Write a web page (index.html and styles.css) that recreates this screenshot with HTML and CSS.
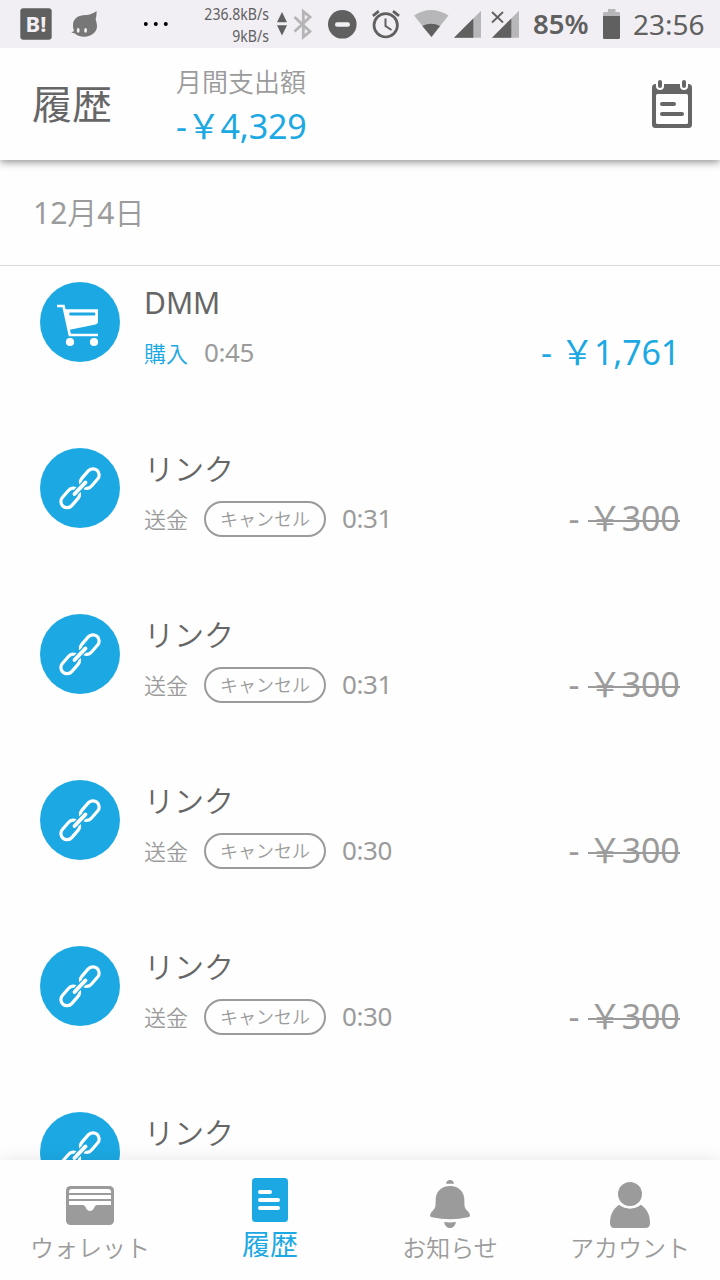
FILE: index.html
```html
<!DOCTYPE html>
<html lang="ja">
<head>
<meta charset="utf-8">
<title>履歴</title>
<link rel="stylesheet" href="styles.css">
</head>
<body>
<svg class="defs" aria-hidden="true">
  <symbol id="link" viewBox="0 0 80 80">
    <g fill="none" stroke="#fff" stroke-width="3.2">
      <rect x="38.8" y="24.4" width="22" height="12.4" rx="6.2" transform="rotate(-49 49.8 30.6)"/>
      <rect x="19.2" y="43.7" width="22" height="12.4" rx="6.2" transform="rotate(-49 30.2 49.9)"/>
    </g>
    <path d="M35 45.4L45 35" stroke="#1ca9e3" stroke-width="6.4" stroke-linecap="round"/>
    <path d="M34.5 46L45.5 34.4" stroke="#fff" stroke-width="3.8" stroke-linecap="round"/>
  </symbol>
</svg>
<div class="screen">
  <div class="status">
    <svg class="s-hatena" width="32" height="48" viewBox="20 0 32 48"><rect x="20.3" y="8.3" width="31.4" height="31.4" rx="3" fill="#606060"/><text x="36" y="31.8" text-anchor="middle" class="hatena-text">B!</text></svg>
    <svg class="s-mascot" width="28" height="48" viewBox="71 0 28 48"><path d="M71.3 32.5L74 31C70.5 21 76 14.5 87 15C91 14.6 93.5 13 96.5 11C96.7 14 96.5 17 95.6 19.5C98.5 27 97 32.5 90 35.5C84 38 77 36 75 33.5Z" fill="#777"/><ellipse cx="78.2" cy="30.4" rx="1.4" ry="2.4" fill="#f1eff3"/><ellipse cx="85.6" cy="30.4" rx="1.4" ry="2.4" fill="#f1eff3"/></svg>
    <svg class="s-dots" width="26" height="48" viewBox="143 0 26 48"><circle cx="145.8" cy="24" r="2"/><circle cx="155.8" cy="24" r="2"/><circle cx="165.8" cy="24" r="2"/></svg>
    <div class="speed"><span>236.8kB/s</span><span>9kB/s</span></div>
    <svg class="s-arrows" width="10" height="48" viewBox="277 0 10 48"><path d="M282 12L287 22.3H277ZM277 25.3H287L282 35.6Z" fill="#606060"/></svg>
    <svg class="s-bt" width="20" height="48" viewBox="293 0 20 48"><path d="M294.5 17L310 31.5L303.3 37V11.5L310 17L294.5 31.5" fill="none" stroke="#b5b4b6" stroke-width="2.8"/></svg>
    <svg class="s-minus" width="29" height="48" viewBox="328 0 29 48"><circle cx="342.3" cy="24.3" r="14.3" fill="#606060"/><rect x="335" y="22.3" width="15" height="4.4" rx="2.2" fill="#f1eff3"/></svg>
    <svg class="s-alarm" width="28" height="48" viewBox="372 0 28 48"><g fill="none" stroke="#606060"><circle cx="385.7" cy="25.3" r="11.7" stroke-width="2.7"/><path d="M385.5 18.5V26L391.5 30" stroke-width="2"/><path d="M372.9 15.9L378.8 11.2M399 15.9L393 11.2" stroke-width="2.8"/></g></svg>
    <svg class="s-wifi" width="35" height="48" viewBox="414 0 35 48"><path d="M414 15.6Q431 4.5 448.5 15.6L431.5 37Z" fill="#b7b6b8"/><path d="M422.3 26Q431 21.5 440 26L431.5 37Z" fill="#606060"/></svg>
    <svg class="s-sig" width="28" height="48" viewBox="454 0 28 48"><path d="M454 37.8L481 10.8V37.8Z" fill="#b7b6b8"/><path d="M454 37.8L473.3 18.5V37.8Z" fill="#606060"/></svg>
    <svg class="s-sigx" width="28" height="48" viewBox="491 0 28 48"><path d="M492 37.8L519 10.8V37.8Z" fill="#b7b6b8"/><path d="M492 37.8L511.3 18.5V37.8Z" fill="#606060"/><path d="M492 12L503 22.5M503 12L492 22.5" stroke="#606060" stroke-width="1.8"/></svg>
    <span class="percent">85%</span>
    <svg class="s-batt" width="18" height="48" viewBox="603 0 18 48"><path d="M608 9H615.5V12H618.5Q620 12 620 13.5V16H603V13.5Q603 12 604.5 12H608Z" fill="#b7b6b8"/><path d="M603 16H620V37.5Q620 39 618.5 39H604.5Q603 39 603 37.5Z" fill="#606060"/></svg>
    <span class="clock">23:56</span>
  </div>

  <header class="header">
    <h1 class="title">履歴</h1>
    <div class="summary"><div class="summary-label">月間支出額</div><div class="summary-value">-￥4,329</div></div>
    <svg class="calendar" width="40" height="48" viewBox="0 0 40 48"><rect y="4" width="40" height="44" rx="3.5" fill="#666"/><rect x="4" y="14" width="32" height="30" rx="1.5" fill="#fff"/><g fill="#666" stroke="#fff" stroke-width="2"><rect x="5" y="-1" width="6" height="10" rx="3"/><rect x="29" y="-1" width="6" height="10" rx="3"/></g><rect x="8" y="22" width="16" height="4" rx="2" fill="#666"/><rect x="8" y="32" width="24" height="4" rx="2" fill="#666"/></svg>
  </header>

  <main class="list">
    <h2 class="date">12<span class="ja">月</span>4<span class="ja">日</span></h2>
    <article class="item">
      <div class="avatar"><svg width="80" height="80" viewBox="0 0 80 80"><path d="M17 24H23.5L29.8 53H58" fill="none" stroke="#fff" stroke-width="2.6"/><path d="M24 27.3H58V39.5Q58 42 55.5 42.4L28.5 48Z" fill="#fff"/><rect x="29.3" y="30.6" width="26" height="2.8" rx="1" fill="#1ca9e3"/><circle cx="30" cy="60" r="4.1" fill="#fff"/><circle cx="54" cy="60" r="4.1" fill="#fff"/></svg></div>
      <div class="body"><div class="name">DMM</div><div class="meta"><span class="kind buy">購入</span><span class="time">0:45</span><span class="amount buy">- ￥1,761</span></div></div>
    </article>
    <article class="item">
      <div class="avatar"><svg width="80" height="80"><use href="#link"/></svg></div>
      <div class="body"><div class="name ja">リンク</div><div class="meta"><span class="kind">送金</span><span class="pill">キャンセル</span><span class="time">0:31</span><span class="amount">- <s>￥300</s></span></div></div>
    </article>
    <article class="item">
      <div class="avatar"><svg width="80" height="80"><use href="#link"/></svg></div>
      <div class="body"><div class="name ja">リンク</div><div class="meta"><span class="kind">送金</span><span class="pill">キャンセル</span><span class="time">0:31</span><span class="amount">- <s>￥300</s></span></div></div>
    </article>
    <article class="item">
      <div class="avatar"><svg width="80" height="80"><use href="#link"/></svg></div>
      <div class="body"><div class="name ja">リンク</div><div class="meta"><span class="kind">送金</span><span class="pill">キャンセル</span><span class="time">0:30</span><span class="amount">- <s>￥300</s></span></div></div>
    </article>
    <article class="item">
      <div class="avatar"><svg width="80" height="80"><use href="#link"/></svg></div>
      <div class="body"><div class="name ja">リンク</div><div class="meta"><span class="kind">送金</span><span class="pill">キャンセル</span><span class="time">0:30</span><span class="amount">- <s>￥300</s></span></div></div>
    </article>
    <article class="item">
      <div class="avatar"><svg width="80" height="80"><use href="#link"/></svg></div>
      <div class="body"><div class="name ja">リンク</div></div>
    </article>
  </main>

  <nav class="nav">
    <a class="tab"><svg width="48" height="56" viewBox="0 0 48 56"><rect y="10" width="48" height="39" rx="4.5" fill="#9b9b9b"/><path d="M3 16Q3 13 6 13H42Q45 13 45 16V17H3ZM3 19H45V23H3ZM3 25H45V29H31Q29.5 29 28.5 31Q27 35 24 35Q21 35 19.5 31Q18.5 29 17 29H3Z" fill="#fff"/></svg><span>ウォレット</span></a>
    <a class="tab active"><svg width="36" height="56" viewBox="0 0 36 56"><rect y="2" width="36" height="44" rx="3.5" fill="#1ca9e3"/><g fill="#fff"><rect x="6" y="14" width="14" height="4" rx="2"/><rect x="6" y="22" width="22" height="4" rx="2"/><rect x="6" y="30" width="22" height="4" rx="2"/></g></svg><span>履歴</span></a>
    <a class="tab"><svg width="40" height="56" viewBox="0 0 40 56"><path d="M16 7.8Q16.5 4 20 4Q23.5 4 24 7.8ZM20 10C29 10 34 16 34.3 23C34.5 29 34 32 37.5 35Q40 37 40 39.5Q40 41 38 41.3Q20 45 2 41.3Q0 41 0 39.5Q0 37 2.5 35C6 32 5.5 29 5.7 23C6 16 11 10 20 10ZM14 46Q20 46.8 26 46Q24.5 52 20 52Q15.5 52 14 46Z" fill="#9b9b9b"/></svg><span>お知らせ</span></a>
    <a class="tab"><svg width="40" height="56" viewBox="0 0 40 56"><circle cx="20" cy="18" r="12" fill="#9b9b9b"/><path d="M9 28.8Q20 36.5 31 28.8C37 33 40 39 40 47Q40 52 35.5 52H4.5Q0 52 0 47C0 39 3 33 9 28.8Z" fill="#9b9b9b"/></svg><span>アカウント</span></a>
  </nav>
</div>
</body>
</html>
```
FILE: styles.css
```css
* { box-sizing: border-box; }
body {
  margin: 0;
  background: #fefefe;
  font-family: "Noto Sans", "Noto Sans CJK JP", sans-serif;
  font-weight: 400;
  color: #9b9b9b;
}
.defs { display: none; }
.screen { width: 720px; height: 1280px; display: flex; flex-direction: column; overflow: hidden; }
svg { display: block; flex: none; }
.ja, .kind, .pill, .tab, .summary-label { font-weight: 350; }

.status { height: 48px; flex: none; display: flex; position: relative; z-index: 2; background: #f1eff3; color: #606060; line-height: 48px; padding-left: 20px; white-space: nowrap; }
.hatena-text { font: 700 22px "Noto Sans", sans-serif; fill: #f1eff3; }
.s-mascot { margin-left: 19px; }
.s-dots { margin-left: 44px; }
.speed { width: 80px; margin-left: 20px; padding-top: 3px; display: flex; flex-direction: column; align-items: flex-end; font-size: 16px; line-height: 22px; transform: scaleX(.88); transform-origin: right; }
.s-arrows { margin-left: 8px; }
.s-bt { margin-left: 6px; }
.s-minus { margin-left: 15px; }
.s-alarm { margin-left: 15px; }
.s-wifi { margin-left: 14px; }
.s-sig { margin-left: 5px; }
.s-sigx { margin-left: 9px; }
.percent { width: 70px; margin-left: 14px; font-size: 27.5px; font-weight: 600; }
.clock { margin-left: 12px; font-size: 28px; }

.header { height: 112px; flex: none; display: flex; background: #fefefe; padding: 0 28px 0 32px; box-shadow: 0 2px 8px rgba(0, 0, 0, .45); position: relative; z-index: 1; }
.title { margin: 0; width: 144px; font-size: 40px; font-weight: 400; line-height: 112px; color: #666; }
.summary { padding-top: 14px; }
.summary-label { font-size: 26px; line-height: 40px; }
.summary-value { font-size: 34px; line-height: 48px; letter-spacing: -.2px; color: #1ca9e3; }
.calendar { margin: 32px 0 0 auto; }

.list { flex: 1; min-height: 0; overflow: hidden; }
.date { margin: 0; height: 106px; padding-left: 33px; border-bottom: 1px solid #d9d9d9; font-size: 30px; font-weight: inherit; line-height: 106px; }
.item { height: 166px; padding: 16px 40px 0; display: flex; gap: 24px; }
.avatar { flex: none; width: 80px; height: 80px; border-radius: 50%; background: #1ca9e3; }
.body { flex: 1; }
.name { height: 44px; font-size: 30px; line-height: 42px; color: #666; }
.meta { display: flex; align-items: center; height: 54px; line-height: 54px; white-space: nowrap; }
.kind { font-size: 22px; margin-right: 16px; }
.pill { width: 122px; height: 36px; margin-right: 16px; border: 2px solid #9b9b9b; border-radius: 18px; font-size: 18px; line-height: 32px; text-align: center; }
.time { font-size: 26px; letter-spacing: -.4px; padding-bottom: 2px; }
.amount { margin-left: auto; padding-bottom: 2px; font-size: 34px; letter-spacing: -.2px; }
.amount s { display: inline-block; width: 92px; text-decoration: none; background: linear-gradient(currentColor, currentColor) 0 29px / 100% 2px no-repeat; }
.buy { color: #1ca9e3; }

.nav { height: 120px; flex: none; display: grid; grid-template-columns: repeat(4, 1fr); background: #fefefe; box-shadow: 0 -2px 16px rgba(0, 0, 0, .08); position: relative; z-index: 1; padding-top: 16px; }
.tab { display: flex; flex-direction: column; align-items: center; font-size: 24px; line-height: 32px; white-space: nowrap; }
.active { color: #1ca9e3; font-size: 28px; font-weight: 400; }
.active span { margin-top: -4px; }
```
